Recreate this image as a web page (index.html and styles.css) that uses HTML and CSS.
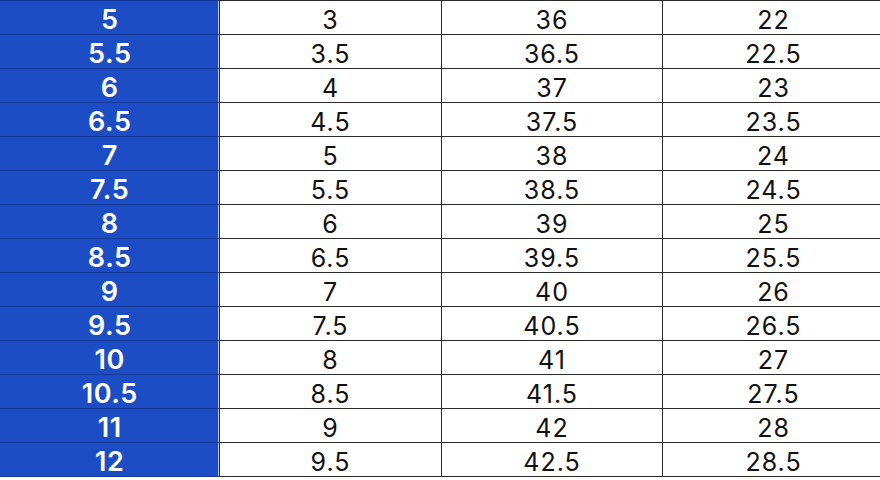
FILE: index.html
```html
<!DOCTYPE html>
<html>
<head>
<meta charset="utf-8">
<link rel="stylesheet" href="styles.css">
</head>
<body>
<table class="size-table">
<colgroup><col class="c-us"><col class="c-uk"><col class="c-eu"><col class="c-cm"></colgroup>
<tbody>
<tr><th>5</th><td>3</td><td>36</td><td>22</td></tr>
<tr><th>5.5</th><td>3.5</td><td>36.5</td><td>22.5</td></tr>
<tr><th>6</th><td>4</td><td>37</td><td>23</td></tr>
<tr><th>6.5</th><td>4.5</td><td>37.5</td><td>23.5</td></tr>
<tr><th>7</th><td>5</td><td>38</td><td>24</td></tr>
<tr><th>7.5</th><td>5.5</td><td>38.5</td><td>24.5</td></tr>
<tr><th>8</th><td>6</td><td>39</td><td>25</td></tr>
<tr><th>8.5</th><td>6.5</td><td>39.5</td><td>25.5</td></tr>
<tr><th>9</th><td>7</td><td>40</td><td>26</td></tr>
<tr><th>9.5</th><td>7.5</td><td>40.5</td><td>26.5</td></tr>
<tr><th>10</th><td>8</td><td>41</td><td>27</td></tr>
<tr><th>10.5</th><td>8.5</td><td>41.5</td><td>27.5</td></tr>
<tr><th>11</th><td>9</td><td>42</td><td>28</td></tr>
<tr><th>12</th><td>9.5</td><td>42.5</td><td>28.5</td></tr>
</tbody>
</table>
</body>
</html>
```
FILE: styles.css
```css
html, body {
  margin: 0;
  padding: 0;
  background: #ffffff;
  overflow: hidden;
}
.size-table {
  border-collapse: collapse;
  table-layout: fixed;
  width: 884px;
  font-family: "Inter", "Lato", sans-serif;
  line-height: 28px;
}
.c-us { width: 219px; }
.c-uk { width: 222px; }
.c-eu { width: 221px; }
.c-cm { width: 222px; }
.size-table th,
.size-table td {
  height: 33px;
  box-sizing: border-box;
  padding: 5px 0 0 1px;
  text-align: center;
  vertical-align: middle;
  border: 1px solid #2a2a2a;
}
.size-table th {
  background: #1c4dc5;
  color: #ffffff;
  font-size: 27px;
  font-weight: 600;
  letter-spacing: 0.6px;
  border-left: none;
  border-top-color: #143a9a;
  border-bottom-color: #143a9a;
  border-right: 1px solid #2a2a2a;
  box-shadow: inset -1px 0 0 #b9c3dc;
}
.size-table td {
  color: #111111;
  font-size: 25px;
  font-weight: 400;
  letter-spacing: 1px;
}
```
